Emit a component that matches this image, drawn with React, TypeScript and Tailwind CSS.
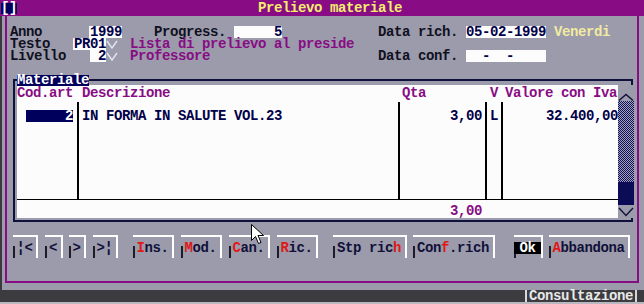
import React from 'react'

const Chevron = () => (
  <svg width="12" height="12" viewBox="0 0 12 12" className="shrink-0">
    <polyline points="1,3 6,10 11,3" fill="none" stroke="#e4e4ee" strokeWidth="1.4" />
  </svg>
)

const Hot = ({ children }: { children: React.ReactNode }) => <span className="text-[#e01818]">{children}</span>

const Btn = ({ className, children, ok }: { className: string; children: React.ReactNode; ok?: boolean }) => (
  <div
    className={`${className} h-[23px] shrink-0 flex items-center justify-center border-t-2 border-r-2 border-white bg-[linear-gradient(to_bottom,transparent_45%,#1c1c28_45%)] bg-no-repeat bg-[length:2px_100%] bg-left text-[#10103a]`}
  >
    {ok ? <span className="w-full h-[12px] bg-black text-white text-center">{children}</span> : children}
  </div>
)

export default function App() {
  return (
    <div className="w-[644px] h-[304px] bg-[#9b9bab] flex flex-col overflow-hidden relative font-['Liberation_Mono',monospace] font-bold text-[14px] leading-[12px] tracking-[-0.4px] text-[#10101e]">
      {/* title bar */}
      <div className="h-[16px] bg-[#880c84] flex items-center shrink-0">
        <span className="ml-[1px] w-[16px] h-[11px] bg-[#00005c] text-white leading-[11px]">[]</span>
        <span className="ml-[241px] text-[#f4ee6c]">Prelievo materiale</span>
      </div>

      <div className="flex h-[274px] shrink-0">
        <div className="w-[2px] bg-[#3a3a3e]" />
        <div className="ml-[3px] w-[634px] h-[267px] border-l-2 border-r-2 border-b-2 border-[#880c84] flex flex-col">
          {/* fields */}
          <div className="pt-[10px] flex flex-col">
            <div className="flex h-[12px]">
              <span className="w-[82px] pl-[3px] shrink-0">Anno</span>
              <span className="w-[33px] bg-[#fcfcfc] text-[#000048] text-right shrink-0">1999</span>
              <span className="w-[32px] shrink-0" />
              <span className="w-[80px] shrink-0">Progress.</span>
              <span className="w-[48px] bg-[#fcfcfc] text-[#000048] text-right shrink-0">5</span>
              <span className="w-[96px] shrink-0" />
              <span className="w-[88px] shrink-0">Data rich.</span>
              <span className="w-[80px] bg-[#fcfcfc] text-[#000048] shrink-0">05-02-1999</span>
              <span className="ml-[8px] text-[#f2eaa2]">Venerdi</span>
            </div>
            <div className="flex h-[12px]">
              <span className="w-[66px] pl-[3px] shrink-0">Testo</span>
              <span className="w-[33px] bg-[#fcfcfc] text-[#000048] text-right shrink-0">PR01</span>
              <Chevron />
              <span className="ml-[12px] text-[#880c84]">Lista di prelievo al preside</span>
            </div>
            <div className="flex h-[12px]">
              <span className="w-[83px] pl-[3px] shrink-0">Livello</span>
              <span className="w-[16px] bg-[#fcfcfc] text-[#000048] text-right shrink-0">2</span>
              <Chevron />
              <span className="ml-[12px] w-[248px] text-[#880c84] shrink-0">Professore</span>
              <span className="w-[88px] shrink-0">Data conf.</span>
              <span className="w-[80px] bg-[#fcfcfc] text-[#000048] whitespace-pre shrink-0">{'  -  -'}</span>
            </div>
          </div>

          {/* Materiale frame */}
          <div className="relative mt-[17px] ml-[6px] w-[620px] h-[143px] border-2 border-[#10103c] pt-[4px] pl-[2px] pb-[2px] flex">
            <span className="absolute -top-[6px] left-[2px] h-[11px] leading-[11px] bg-[#00005c] text-white">Materiale</span>
            <div className="flex-1 bg-[#fcfcfc] flex flex-col">
              <div className="h-[17px] pt-[2px] grid grid-cols-[60px_2px_319px_2px_85px_2px_14px_2px_115px] text-[#880c84]">
                <span>Cod.art</span>
                <span />
                <span className="pl-[3px]">Descrizione</span>
                <span />
                <span className="pl-[2px]">Qta</span>
                <span />
                <span className="pl-[3px]">V</span>
                <span />
                <span className="pl-[2px]">Valore con Iva</span>
              </div>
              <div className="h-[97px] grid grid-cols-[60px_2px_319px_2px_85px_2px_14px_2px_115px] text-[#000048]">
                <div className="pt-[8px] pl-[9px]">
                  <div className="w-[47px] h-[12px] bg-[#00005c] text-white text-right">2</div>
                </div>
                <div className="bg-black" />
                <div className="pt-[8px] pl-[3px]">IN FORMA IN SALUTE VOL.23</div>
                <div className="bg-black" />
                <div className="pt-[8px] pr-[3px] text-right">3,00</div>
                <div className="bg-black" />
                <div className="pt-[8px] pl-[3px]">L</div>
                <div className="bg-black" />
                <div className="pt-[8px] text-right">32.400,00</div>
              </div>
              <div className="h-[1px] bg-black" />
              <div className="h-[18px] pt-[5px] grid grid-cols-[60px_2px_319px_2px_85px_2px_14px_2px_115px] text-[#880c84]">
                <span />
                <span />
                <span />
                <span />
                <span className="pr-[3px] text-right">3,00</span>
              </div>
            </div>
            {/* scrollbar */}
            <div className="w-[16px] -mr-[3px] flex flex-col relative">
              <div className="h-[16px] bg-[#9b9bab]">
                <svg width="16" height="16" viewBox="0 0 16 16">
                  <polyline points="1,15.5 8,9.5 15,15.5" fill="none" stroke="#10103c" strokeWidth="1.4" />
                </svg>
              </div>
              <div className="h-[81px] bg-[repeating-conic-gradient(#10105a_0%_25%,#a4a4b8_0%_50%)] bg-[length:2px_2px]" />
              <div className="h-[23px] bg-[#0c0c56]" />
              <div className="h-[13px] bg-[#9b9bab]">
                <svg width="16" height="13" viewBox="0 0 16 13">
                  <polyline points="1,3 8,10.5 15,3" fill="none" stroke="#10103c" strokeWidth="1.4" />
                </svg>
              </div>
            </div>
          </div>

          {/* buttons */}
          <div className="mt-[13px] ml-[6px] flex">
            <Btn className="w-[25px]">¦&lt;</Btn>
            <Btn className="ml-[7px] w-[18px]">&lt;</Btn>
            <Btn className="ml-[6px] w-[17px]">&gt;</Btn>
            <Btn className="ml-[7px] w-[25px]">&gt;¦</Btn>
            <Btn className="ml-[15px] w-[41px]"><span><Hot>I</Hot>ns.</span></Btn>
            <Btn className="ml-[7px] w-[41px]"><span><Hot>M</Hot>od.</span></Btn>
            <Btn className="ml-[7px] w-[41px]"><span><Hot>C</Hot>an.</span></Btn>
            <Btn className="ml-[7px] w-[41px]"><span><Hot>R</Hot>ic.</span></Btn>
            <Btn className="ml-[15px] w-[74px]"><span>Stp ric<Hot>h</Hot></span></Btn>
            <Btn className="ml-[6px] w-[82px]"><span>Con<Hot>f</Hot>.rich</span></Btn>
            <Btn className="ml-[19px] w-[29px]" ok>Ok</Btn>
            <Btn className="ml-[6px] w-[81px]"><span><Hot>A</Hot>bbandona</span></Btn>
          </div>
        </div>
      </div>

      {/* status bar */}
      <div className="h-[12px] bg-[#3c3c40] flex justify-end shrink-0">
        <span className="mr-[7px] border-l-2 border-r-2 border-[#d8d8d8] px-[2px] text-[#e8e8e8] leading-[12px]">Consultazione</span>
      </div>
      <div className="h-[2px] bg-[#b8b8c0] shrink-0" />

      {/* mouse pointer */}
      <svg className="absolute left-[251px] top-[224px]" width="14" height="21" viewBox="0 0 14 21">
        <path d="M0.5 0.5 L0.5 16.5 L4.5 12.5 L7.5 19.5 L10 18.5 L7 11.5 L12.5 11.5 Z" fill="#ffffff" stroke="#000000" strokeWidth="1" />
      </svg>
    </div>
  )
}
